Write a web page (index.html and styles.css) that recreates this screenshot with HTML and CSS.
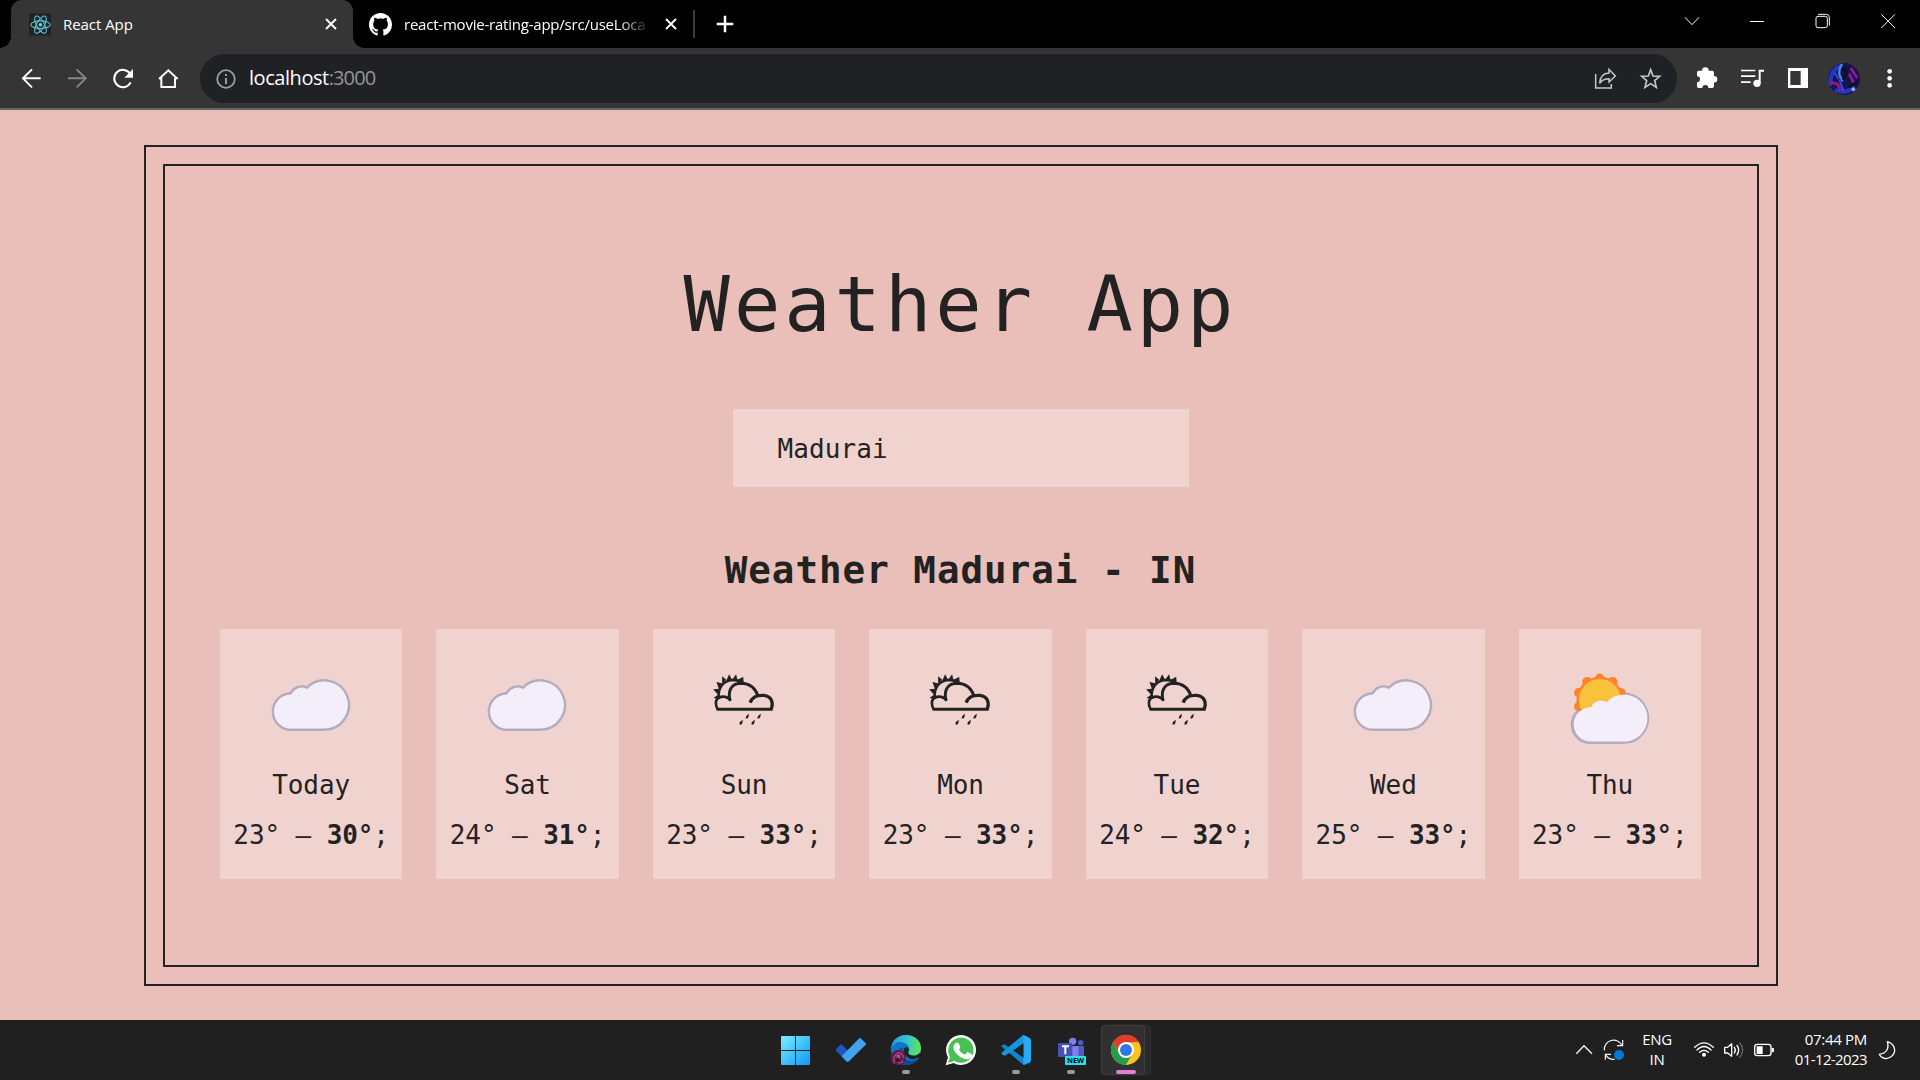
FILE: index.html
```html
<!DOCTYPE html>
<html lang="en">
<head>
<meta charset="utf-8">
<title>React App</title>
<link rel="stylesheet" href="styles.css">
</head>
<body>
<svg class="defs" aria-hidden="true">
  <defs>
    <path id="cloud-shape" d="M71.5 100.8A18.3 18.3 0 0 1 70.5 64.2A12.3 12.3 0 0 1 86.7 58.6A24.7 24.7 0 1 1 104.3 100.8Z"/>
    <symbol id="cloud" viewBox="0 0 182 136">
      <use href="#cloud-shape" fill="#f4eefa" stroke="#b4abbf" stroke-width="2.4"/>
    </symbol>
    <symbol id="rain" viewBox="39 27 546 408">
      <g fill="none" stroke="#222" stroke-width="8">
        <path d="M230 268H397" stroke-width="9"/>
        <path d="M233 269C224 254 226 238 236 233C249 227 264 230 272 242" stroke-width="8"/>
        <path d="M269 240C262 204 280 190 304 190C330 191 345 205 353 226" stroke-width="9"/>
        <path d="M330 248C337 228 352 225 371 226C396 229 401 251 392 269" stroke-width="10"/>
        <path d="M236 234C233 200 252 181 280 180C292 180 300 183 308 189" stroke-width="7"/>
      </g>
      <path fill="#222" d="M220 234L237 222L238 238ZM219 208L238 206L234 224ZM229 186L246 190L236 206ZM246 169L259 180L246 190ZM267 163L276 179L259 181ZM288 163L292 180L276 179ZM309 170L311 190L292 180Z"/>
      <path fill="#222" d="M308 299Q296 306 298 313Q307 318 308 299ZM326 281Q315 289 317 295Q326 299 326 281ZM344 299Q332 306 334 313Q343 318 344 299ZM362 281Q350 289 352 295Q361 299 362 281Z"/>
    </symbol>
    <symbol id="partly" viewBox="0 0 182 136">
      <use href="#cloud-shape" y="13" fill="#b4abbf" stroke="#b4abbf" stroke-width="2.4"/>
      <g fill="#ff822d">
        <circle cx="80.7" cy="71" r="23.4"/>
        <circle cx="80.7" cy="49.2" r="4.6"/><circle cx="93.4" cy="53" r="5"/><circle cx="101.8" cy="63.8" r="4.7"/><circle cx="101.8" cy="77.4" r="4.3"/>
        <circle cx="68" cy="53" r="5"/><circle cx="59.6" cy="63.8" r="4.7"/><circle cx="59.6" cy="77.4" r="4.7"/>
      </g>
      <circle cx="80.7" cy="71" r="21" fill="#f9c23c"/>
      <path fill="#f4eefa" d="M71.5 112.6A17.2 17.2 0 0 1 72 78.2A10.7 10.7 0 0 1 87.5 73.2A23.5 23.5 0 1 1 104.3 112.6Z"/>
    </symbol>
  </defs>
</svg>

<header class="tabs">
  <div class="tab tab-active">
    <svg class="favicon" viewBox="0 0 22 22"><rect width="22" height="22" rx="2" fill="#222"/><g fill="none" stroke="#58c4dc" stroke-width="1.1"><ellipse cx="11.5" cy="11.2" rx="9.7" ry="3.8"/><ellipse cx="11.5" cy="11.2" rx="9.7" ry="3.8" transform="rotate(60 11.5 11.2)"/><ellipse cx="11.5" cy="11.2" rx="9.7" ry="3.8" transform="rotate(120 11.5 11.2)"/></g><circle cx="11.5" cy="11.2" r="1.8" fill="#61dafb"/></svg>
    <span class="tab-title">React App</span>
    <svg class="close" viewBox="0 0 12 12"><path d="M1 1L11 11M11 1L1 11"/></svg>
  </div>
  <div class="tab tab-github">
    <svg class="github" viewBox="0 0 16 16"><path fill="#fff" d="M8 0C3.58 0 0 3.58 0 8c0 3.54 2.29 6.53 5.47 7.59.4.07.55-.17.55-.38 0-.19-.01-.82-.01-1.49-2.01.37-2.53-.49-2.69-.94-.09-.23-.48-.94-.82-1.13-.28-.15-.68-.52-.01-.53.63-.01 1.08.58 1.23.82.72 1.21 1.87.87 2.33.66.07-.52.28-.87.51-1.07-1.78-.2-3.64-.89-3.64-3.95 0-.87.31-1.59.82-2.15-.08-.2-.36-1.02.08-2.12 0 0 .67-.21 2.2.82.64-.18 1.32-.27 2-.27s1.36.09 2 .27c1.53-1.04 2.2-.82 2.2-.82.44 1.1.16 1.92.08 2.12.51.56.82 1.27.82 2.15 0 3.07-1.87 3.75-3.65 3.95.29.25.54.73.54 1.48 0 1.07-.01 1.93-.01 2.2 0 .21.15.46.55.38A8.01 8.01 0 0 0 16 8c0-4.42-3.58-8-8-8z"/></svg>
    <span class="tab-title fade">react-movie-rating-app/src/useLoca</span>
    <svg class="close" viewBox="0 0 12 12"><path d="M1 1L11 11M11 1L1 11"/></svg>
  </div>
  <span class="divider"></span>
  <svg class="plus" viewBox="0 0 18 18"><path d="M9 .7V17.3M.7 9H17.3"/></svg>
  <svg class="window-controls" viewBox="360 0 720 144"><g fill="none" stroke="#fff" stroke-width="3"><path d="M375 52L396 74L417 52"/><path d="M570 64.5H612"/><rect x="768" y="49" width="34" height="34" rx="6"/><path d="M774 43H799Q808 43 808 53V77"/><path d="M964 43L1005 84M1005 43L964 84"/></g></svg>
</header>

<nav class="toolbar">
  <svg class="nav-icons" viewBox="0 144 600 180"><g fill="none" stroke-width="6" stroke="#fff"><path d="M122 235H70M96 208L69 235L96 262"/><path stroke="#858585" d="M204 235H256M230 208L257 235L230 262"/><path d="M391 222A26 26 0 1 0 392 247"/><path d="M484 233V261H525V233M477 237L505 211L533 237"/></g><path fill="#fff" d="M399 207V233H373Z"/></svg>
  <div class="address">
    <svg class="info" viewBox="0 0 20 20"><circle cx="10" cy="10" r="8.8" fill="none" stroke="#9aa0a6" stroke-width="1.8"/><path d="M10 5V7M10 9V15" stroke="#9aa0a6" stroke-width="2"/></svg>
    <span class="url">localhost<span class="port">:3000</span></span>
    <svg class="address-icons" viewBox="90 189 231 90"><g fill="none" stroke="#c4c7c9" stroke-width="4.5"><path d="M107 222V264H154V252"/><path d="M119 250Q121 220 147 219V208L166 228L147 246V236Q128 236 119 250Z"/><path stroke-width="5" stroke-linejoin="miter" d="M272 209L279 228L299 229L284 242L289 262L272 251L255 262L260 242L245 229L265 228Z"/></g></svg>
  </div>
  <svg class="tool-icons" viewBox="351 144 729 180">
    <path fill="#fff" d="M416 212H426A10 10 0 0 1 446 212H456Q462 212 462 218V228A10 10 0 0 1 462 248V258Q462 264 456 264H445A9 9 0 0 0 427 264H416Q411 264 411 258V247A9 9 0 0 0 411 229V218Q411 212 416 212Z"/>
    <g fill="#fff"><path d="M543 209H586V214H543ZM543 226H586V231H543ZM543 244H572V249H543ZM593 209H612V215H602V250H596V209Z"/><circle cx="591" cy="250" r="11"/></g>
    <path fill="#fff" fill-rule="evenodd" d="M684 204H744V264H684ZM691 213V255H722V213Z"/>
    <circle cx="852" cy="237" r="48" fill="#19134d"/>
    <g fill="none" stroke-linecap="round"><path d="M812 252Q808 214 839 199M830 272Q858 281 878 264" stroke="#2436bb" stroke-width="13"/><path d="M845 194Q829 219 847 241" stroke="#4188f2" stroke-width="7"/><path d="M874 207L890 231M868 223L881 248M814 247L833 252L840 268" stroke="#841d8e" stroke-width="9"/><path d="M850 206L861 222L850 236M891 246L870 260" stroke="#101029" stroke-width="9"/><path d="M839 241L850 271M825 220L834 235" stroke="#344be2" stroke-width="6"/></g><circle cx="880" cy="268" r="6" fill="#92a6f8"/>
    <g fill="#fff"><circle cx="989" cy="214" r="7"/><circle cx="989" cy="235" r="7"/><circle cx="989" cy="256" r="7"/></g>
  </svg>
</nav>

<main class="page">
  <section class="app">
    <h1>Weather App</h1>
    <input class="search" type="text" value="Madurai" aria-label="Location">
    <h2>Weather Madurai - IN</h2>
    <ul class="weather">
      <li class="day"><svg><use href="#cloud"/></svg><p>Today</p><p>23° — <strong>30°</strong>;</p></li>
      <li class="day"><svg><use href="#cloud"/></svg><p>Sat</p><p>24° — <strong>31°</strong>;</p></li>
      <li class="day"><svg><use href="#rain"/></svg><p>Sun</p><p>23° — <strong>33°</strong>;</p></li>
      <li class="day"><svg><use href="#rain"/></svg><p>Mon</p><p>23° — <strong>33°</strong>;</p></li>
      <li class="day"><svg><use href="#rain"/></svg><p>Tue</p><p>24° — <strong>32°</strong>;</p></li>
      <li class="day"><svg><use href="#cloud"/></svg><p>Wed</p><p>25° — <strong>33°</strong>;</p></li>
      <li class="day"><svg><use href="#partly"/></svg><p>Thu</p><p>23° — <strong>33°</strong>;</p></li>
    </ul>
  </section>
</main>

<footer class="taskbar">
  <div class="launchers">
    <svg viewBox="24 15 165 180"><defs><linearGradient id="win" x1="63" y1="63" x2="150" y2="150" gradientUnits="userSpaceOnUse"><stop stop-color="#7aeefe"/><stop offset="1" stop-color="#0c98f8"/></linearGradient></defs><path fill="url(#win)" d="M65 63H105V105H63V65ZM108 63H148L150 65V105H108ZM63 108H105V150H65L63 148ZM108 108H150V148L148 150H108Z"/></svg>
    <svg viewBox="189 15 165 180"><path fill="#1a57be" d="M243 87L228 102Q227 106 229 108L258 138L277 119Z"/><path fill="#41a3ee" d="M301 69L317 84Q319 87 317 89L267 139Q263 142 259 139L245 124L298 70Z"/></svg>
    <svg viewBox="354 15 165 180"><defs><linearGradient id="edge" x1="395" y1="80" x2="483" y2="95" gradientUnits="userSpaceOnUse"><stop stop-color="#2b9ed9"/><stop offset=".5" stop-color="#31c5cd"/><stop offset="1" stop-color="#69e34d"/></linearGradient></defs><circle cx="438" cy="105" r="45" fill="#1176c9"/><path fill="#0d4c90" d="M428 97Q415 129 448 137Q466 139 478 129Q464 151 438 150Q404 145 411 114Q415 102 428 97Z"/><path fill="#202020" d="M434 98Q446 94 447 106Q440 118 454 120Q467 124 486 112V120Q464 139 446 130Q430 119 430 105Z"/><path fill="url(#edge)" d="M393 102C395 76 413 60 438 60C465 60 483 78 483 98C483 117 467 126 450 119Q443 116 447 109C453 90 433 79 414 81Q398 86 393 102Z"/><circle cx="415" cy="128" r="23" fill="#572045"/><path d="M402 145Q399 121 413 114Q429 112 431 130M412 140Q423 149 429 137" fill="none" stroke="#c3379e" stroke-width="4"/><path d="M411 119L421 121L418 132L409 129Z" fill="#d45cb2"/><path d="M414 123L418 142L407 139Z" fill="#291524"/><rect x="426" y="165" width="24" height="12" rx="6" fill="#9b9b9b"/></svg>
    <svg viewBox="519 15 165 180"><path fill="#fff" d="M557 151L564 127A45 45 0 1 1 581 144Z"/><path fill="#46c254" d="M564 144L570 125A38 38 0 1 1 583 138Z"/><path fill="#fff" d="M587 84Q592 80 597 86L601 96Q601 99 597 104Q604 116 615 119L621 112Q623 110 627 113L636 118Q638 129 626 132C606 137 578 111 580 96Q581 88 587 84Z"/></svg>
    <svg viewBox="84 15 165 180"><path fill="#0d86d1" d="M123 94L132 87L212 143L191 150Z"/><path fill="#1596df" d="M123 115L189 60L202 65L202 80L133 123Z"/><path fill="#28acf3" d="M190 60L209 69Q213 71 213 76V135Q213 140 208 142L190 150Z"/><path fill="#202020" d="M190 85V125L162 105Z"/><rect x="156" y="165" width="24" height="12" rx="6" fill="#9b9b9b"/></svg>
    <svg viewBox="249 15 165 180"><circle cx="338" cy="79" r="11" fill="#7b83eb"/><circle cx="362" cy="83" r="8" fill="#5059c9"/><path fill="#5059c9" d="M340 93H372V123H340Z"/><path fill="#7b83eb" d="M336 93H355V123H336Z"/><rect x="294" y="84" width="43" height="42" rx="3" fill="#4750b8"/><path fill="#fff" d="M306 91H327V97H319V118H313V97H306Z"/><rect x="315" y="123" width="63" height="27" rx="3" fill="#27e4e8"/><text x="346.5" y="145" class="new-badge">NEW</text><rect x="321" y="165" width="24" height="12" rx="6" fill="#9b9b9b"/></svg>
    <svg viewBox="414 15 165 180"><rect x="440" y="31" width="132" height="148" rx="12" fill="#292929" stroke="#363636" stroke-width="3"/><rect x="424" y="31" width="130" height="148" rx="12" fill="#303030" stroke="#404040" stroke-width="3"/><circle cx="498" cy="105" r="45" fill="#fcc31e"/><path fill="#e33b2e" d="M459 82A45 45 0 0 1 537 82H498L478 116Z"/><path fill="#269b49" d="M459 82A45 45 0 0 0 497 150L518 116H478Z"/><circle cx="498" cy="105" r="24" fill="#fff"/><circle cx="498" cy="105" r="18" fill="#2f76e8"/><rect x="468" y="165" width="60" height="12" rx="6" fill="#e080d8"/></svg>
  </div>
  <div class="tray">
    <svg class="tray-left" viewBox="36 15 174 180"><g fill="none" stroke="#f4f4f4" stroke-width="4"><path d="M49 116L72 92L96 116"/><path stroke-width="3.5" d="M133 106A28 28 0 0 1 186 91M188 75V92H171M136 134V118H153M138 121A28 28 0 0 0 164 133"/></g><circle cx="177" cy="120" r="15" fill="#0078d7"/></svg>
    <div class="lang">ENG<br>IN</div>
    <svg class="tray-status" viewBox="390 15 264 180"><g fill="none" stroke="#fff" stroke-width="4" stroke-linecap="round"><path d="M404 97Q432 70 460 97M411 105Q432 84 453 105M419 112Q432 100 445 112"/><path stroke-linejoin="round" d="M494 97H503L515 86V124L503 114H494Z"/><path d="M523 97Q529 105 523 114M531 91Q541 105 531 120"/><path stroke="#666" d="M539 84Q557 105 539 127"/><rect x="584" y="88" width="49" height="34" rx="8"/></g><circle cx="432" cy="119" r="6" fill="#fff"/><path fill="#fff" d="M590 94H608V117H590ZM635 99H639Q642 99 642 102V108Q642 112 639 112H635Z"/></svg>
    <div class="clock">07:44 PM<br><span class="date">01-12-2023</span></div>
    <svg class="moon" viewBox="948 15 75 180"><path fill="none" stroke="#fff" stroke-width="4" stroke-linejoin="round" d="M982 80C1004 86 1010 109 997 122C984 136 964 132 958 118C979 115 988 101 982 80Z"/></svg>
  </div>
</footer>
</body>
</html>
```
FILE: styles.css
```css
* { box-sizing: border-box; }
body {
  margin: 0;
  width: 1920px;
  height: 1080px;
  overflow: hidden;
  display: flex;
  flex-direction: column;
  background: #eabeb9;
  color: #222;
  font-family: "Open Sans", "Noto Sans", sans-serif;
}
svg { display: block; flex: none; }
.defs { position: absolute; width: 0; height: 0; }

/* Tab strip */
.tabs { height: 48px; flex: none; display: flex; background: #000; color: #fff; padding-left: 11px; }
.tab { display: flex; align-items: center; height: 48px; }
.tab-active { width: 342px; padding: 0 16px 0 18px; background: #353535; border-radius: 11px 11px 0 0; position: relative; }
.tab-active::before, .tab-active::after { content: ""; position: absolute; bottom: 0; width: 11px; height: 11px; }
.tab-active::before { left: -11px; background: radial-gradient(circle at 0 0, #000 10.5px, #353535 11px); }
.tab-active::after { right: -11px; background: radial-gradient(circle at 100% 0, #000 10.5px, #353535 11px); }
.favicon { width: 22px; height: 23px; }
.tab-title { font-size: 15px; letter-spacing: -0.05px; line-height: 48px; margin-left: 12px; flex: 1; white-space: nowrap; }
.close { width: 12px; height: 12px; fill: none; stroke: #fff; stroke-width: 1.9; }
.tab-github { width: 341px; padding: 0 17px 0 16px; }
.github { width: 23px; height: 23px; }
.fade { flex: none; width: 252px; margin-right: auto; letter-spacing: -0.22px; -webkit-mask-image: linear-gradient(to right, #000 215px, transparent 246px); mask-image: linear-gradient(to right, #000 215px, transparent 246px); }
.divider { width: 2px; height: 28px; margin: 10px 0 0 -1px; background: #3c3c3c; }
.plus { width: 18px; height: 18px; margin: 15px 0 0 21px; fill: none; stroke: #fff; stroke-width: 2.5; }
.window-controls { width: 240px; height: 48px; margin-left: auto; }

/* Toolbar */
.toolbar { height: 62px; flex: none; display: flex; background: #353535; border-bottom: 2px solid #666; }
.nav-icons { width: 200px; height: 60px; }
.address { flex: 1; height: 49px; margin-top: 6px; padding: 0 10px 0 16px; display: flex; align-items: center; background: #202124; border-radius: 25px; }
.info { width: 20px; height: 20px; }
.url { margin-left: 13px; color: #fff; font-size: 20px; letter-spacing: -0.45px; line-height: 46px; padding-bottom: 2px; }
.port { color: #929497; letter-spacing: -0.9px; }
.address-icons { width: 77px; height: 30px; margin: -1px 0 0 auto; }
.tool-icons { width: 243px; height: 60px; }

/* Weather page */
.page { flex: 1; padding: 54px 161px 53px 163px; background: #eabeb9; font-family: "DejaVu Sans Mono", monospace; }
.app { height: 803px; border: 2px solid #222; outline: 2px solid #222; outline-offset: 17px; padding: 89px 56px 0 55px; display: flex; flex-direction: column; align-items: center; }
h1 { margin: 0; font-weight: 400; font-size: 77px; line-height: 100px; letter-spacing: 4px; white-space: nowrap; }
.search { margin: 54px 0 58px; width: 456px; height: 78px; border: 0; border-radius: 0; outline: none; padding: 2px 43px 0 45px; background: #f0d3cf; color: #222; font: 26px "DejaVu Sans Mono", monospace; letter-spacing: 0.1px; }
h2 { margin: 0 0 34px; font-size: 37.5px; line-height: 50px; letter-spacing: 1px; white-space: nowrap; }
.weather { width: 1481px; list-style: none; margin: 0; padding: 0; display: grid; grid-template-columns: repeat(7, 1fr); column-gap: 34.2px; }
.day { height: 250px; background: #f0d3cf; text-align: center; }
.day svg { width: 100%; height: 136px; }
.day p { margin: 0 0 10px; font-size: 26px; line-height: 40px; letter-spacing: -0.1px; white-space: nowrap; }

/* Taskbar */
.taskbar { height: 60px; flex: none; display: flex; justify-content: space-between; background: #202020; color: #fff; padding: 0 19px 0 768px; }
.launchers { display: grid; grid-template-columns: repeat(7, 55px); }
.launchers svg { width: 55px; height: 60px; }
.new-badge { font: 700 22px "Open Sans", sans-serif; text-anchor: middle; fill: #000; }
.tray { display: flex; font-size: 15px; letter-spacing: -0.3px; line-height: 20px; }
.tray-left { width: 58px; height: 60px; }
.lang { width: 54px; padding-top: 9px; text-align: center; margin-right: 6px; }
.tray-status { width: 88px; height: 60px; }
.clock { width: 89px; padding-top: 9px; text-align: right; white-space: nowrap; }
.date { letter-spacing: -0.6px; }
.moon { width: 25px; height: 60px; margin-left: 9px; }
```
